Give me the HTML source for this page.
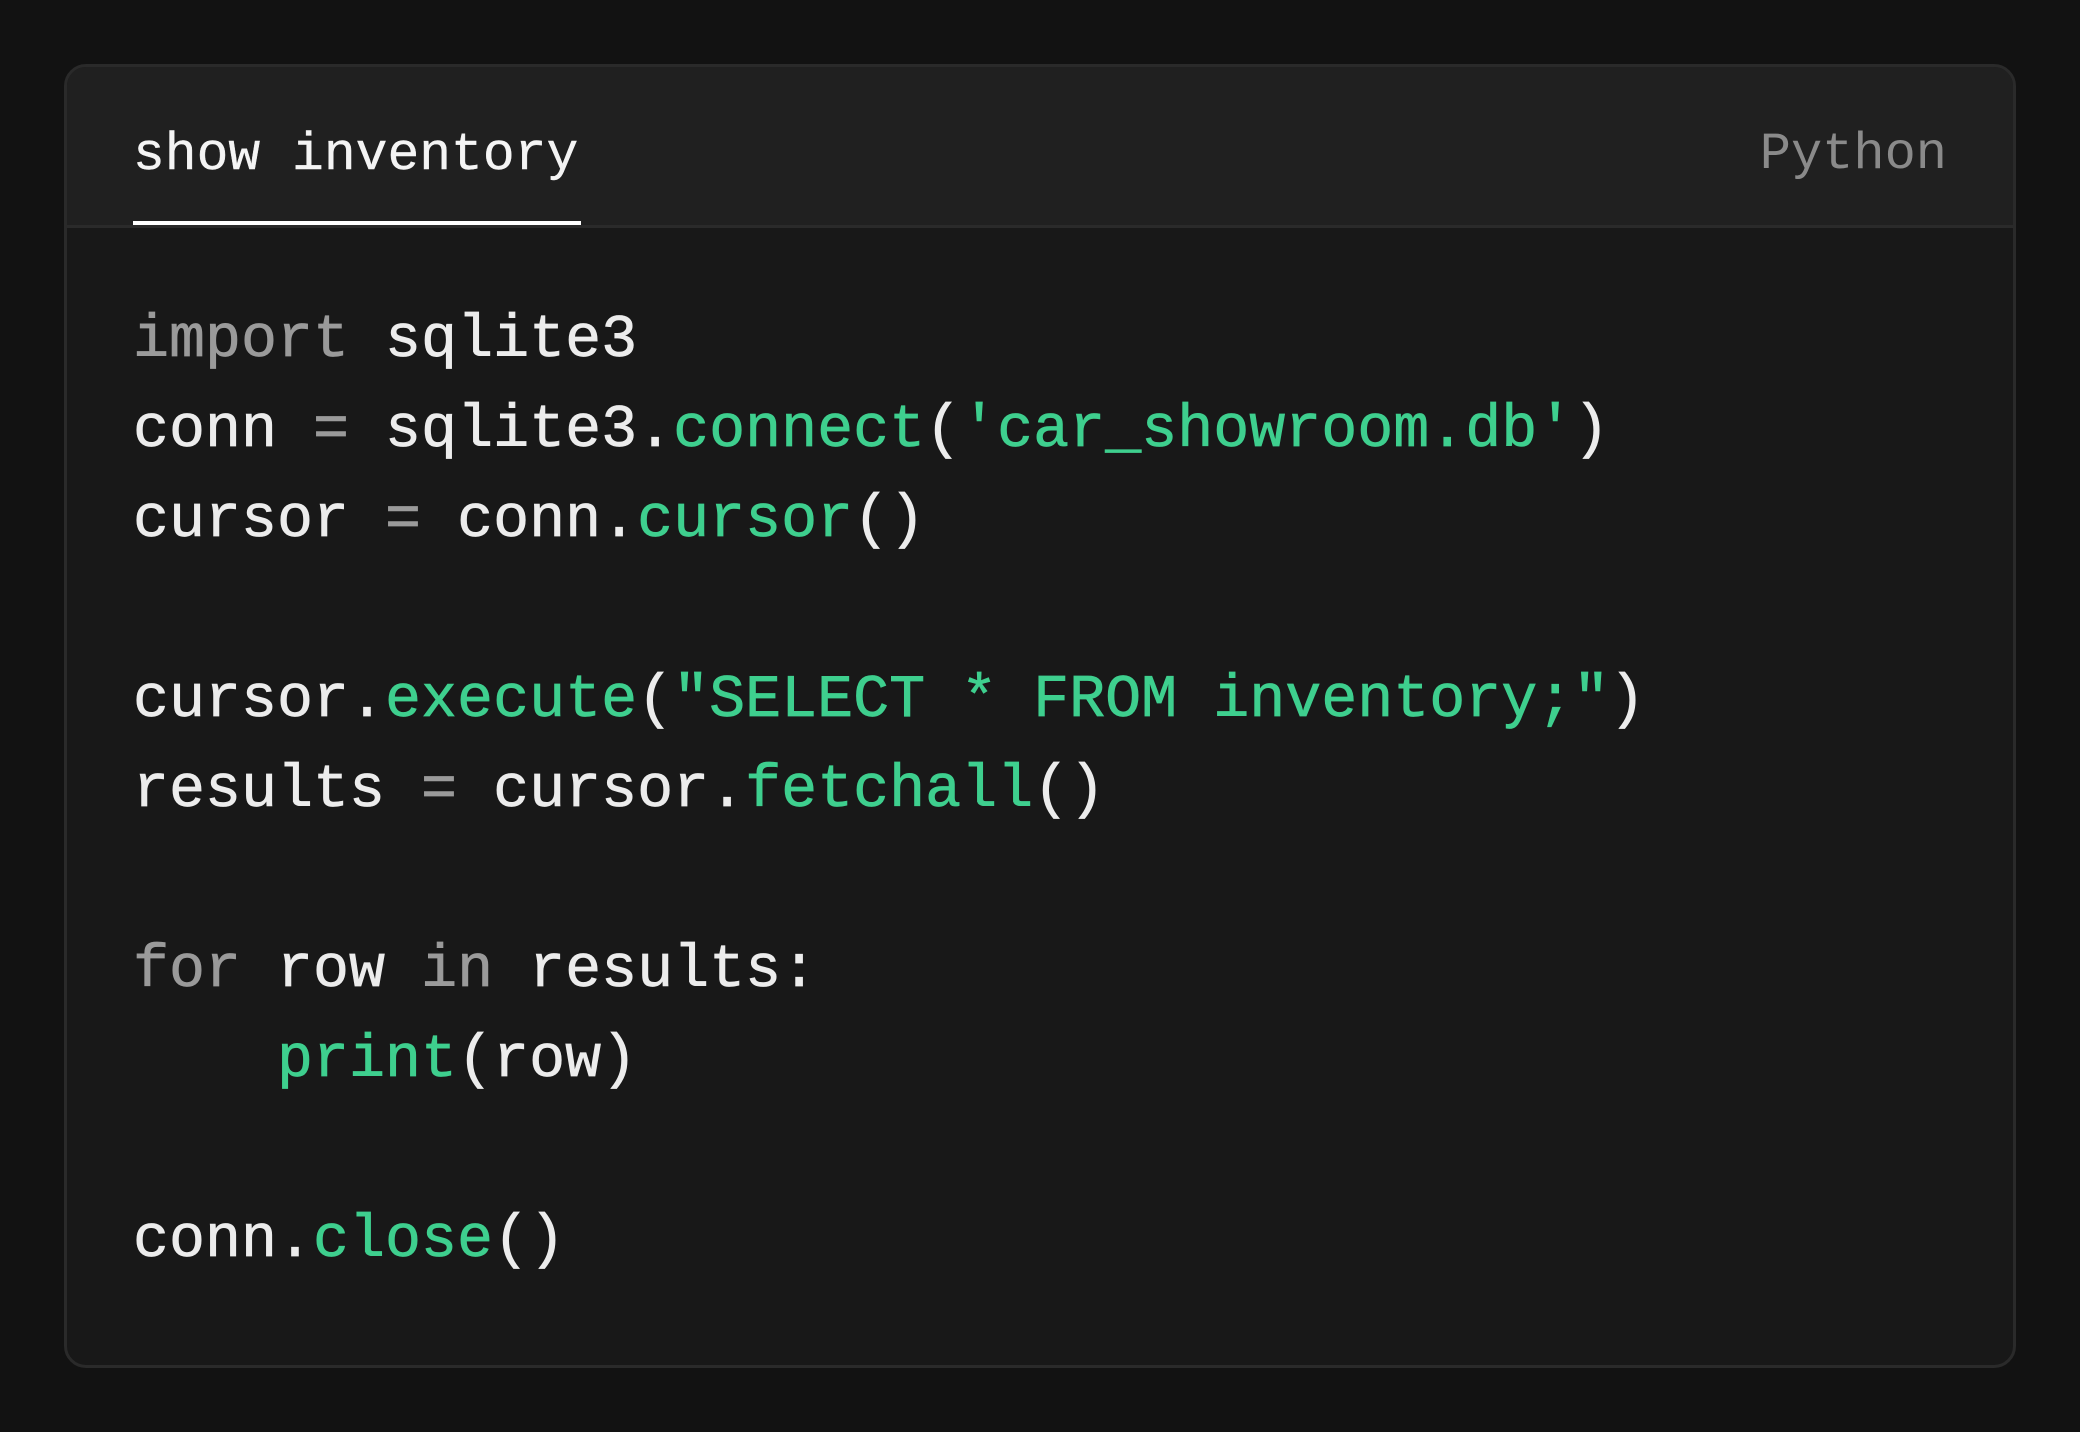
<!DOCTYPE html>
<html><head><meta charset="utf-8"><style>
html,body{margin:0;padding:0;background:#121212;width:2080px;height:1432px;overflow:hidden}
.card{position:absolute;left:64px;top:64px;width:1946px;height:1298px;border:3px solid #2a2a2a;border-radius:22px;background:#181818;overflow:hidden}
.hdr{position:absolute;left:0;top:0;right:0;height:158px;background:#202020;border-bottom:3px solid #2a2a2a}
.t{position:absolute;font-family:"Liberation Mono","DejaVu Sans Mono",monospace;white-space:pre}
.title{left:66px;top:58px;font-size:53px;line-height:60px;color:#f4f4f4;-webkit-text-stroke:0.4px #f4f4f4}
.py{right:66px;top:58px;font-size:52px;line-height:60px;color:#8a8a8a}
.ul{position:absolute;left:66px;top:154px;width:448px;height:4px;background:#fff}
.code{left:66px;top:229px;font-size:60px;line-height:90px;color:#ececec;-webkit-text-stroke:0.7px currentColor}
.k{color:#9a9a9a}.g{color:#3ecf8e}
</style></head><body>
<div class="card">
<div class="hdr"></div>
<div class="t title">show inventory</div>
<div class="t py">Python</div>
<div class="ul"></div>
<div class="t code"><span class="k">import</span> sqlite3
conn <span class="k">=</span> sqlite3.<span class="g">connect</span>(<span class="g">'car_showroom.db'</span>)
cursor <span class="k">=</span> conn.<span class="g">cursor</span>()

cursor.<span class="g">execute</span>(<span class="g">"SELECT * FROM inventory;"</span>)
results <span class="k">=</span> cursor.<span class="g">fetchall</span>()

<span class="k">for</span> row <span class="k">in</span> results:
    <span class="g">print</span>(row)

conn.<span class="g">close</span>()</div>
</div>
</body></html>
